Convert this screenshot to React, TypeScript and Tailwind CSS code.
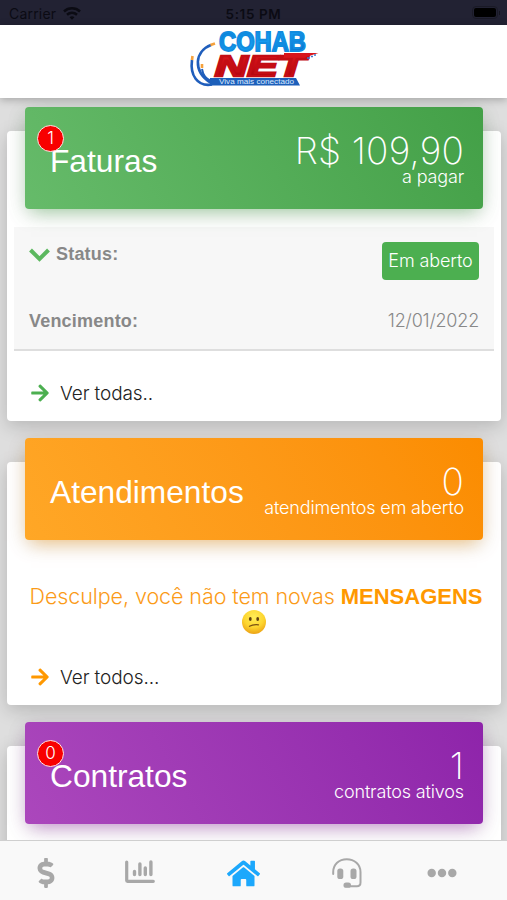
import type { ReactNode } from 'react'
import { FaArrowRight, FaDollarSign, FaEllipsisH, FaHome } from 'react-icons/fa'

const TABS = [
  { name: 'Financeiro', icon: <FaDollarSign size={30} />, active: false },
  { name: 'Consumo', icon: <ChartIcon />, active: false },
  { name: 'Início', icon: <FaHome size={33} />, active: true },
  { name: 'Suporte', icon: <HeadsetIcon />, active: false },
  { name: 'Mais', icon: <FaEllipsisH size={30} />, active: false },
]

function ChartIcon() {
  return (
    <svg width="30" height="24" viewBox="0 0 30 24" fill="none" stroke="currentColor" strokeLinecap="round" className="shrink-0 -translate-x-[5px] -translate-y-px">
      <path d="M1.700 2V20.500Q1.700 21.300 2.500 21.300H28.300" strokeWidth="3.200" />
      <path d="M9.500 11.500V14.500M14.900 4V14.500M20.300 8V14.500M25.900 2V14.500" strokeWidth="3.400" />
    </svg>
  )
}

function HeadsetIcon() {
  return (
    <svg width="30" height="30" viewBox="0 0 30 30" fill="none" stroke="currentColor" className="shrink-0 translate-x-[4px]">
      <path d="M1.200 16V14C1.200 6.500 7 1.200 14.700 1.200S28.500 6.500 28.500 14V24.500Q28.500 28.200 25 28.200H14" strokeWidth="2" strokeLinecap="round" />
      <rect x="5.300" y="10.500" width="6" height="10.500" rx="2.600" fill="currentColor" stroke="none" />
      <rect x="18.500" y="10.500" width="6" height="10.500" rx="2.600" fill="currentColor" stroke="none" />
      <rect x="11.500" y="24.500" width="7.500" height="5.300" rx="2.600" fill="currentColor" stroke="none" />
    </svg>
  )
}

function Logo() {
  return (
    <svg width="132" height="62" viewBox="0 0 132 62" aria-label="Cohab Net">
      <defs>
        <linearGradient id="cohab" x1="0" x2="1" y1="0" y2="1">
          <stop offset="0" stopColor="#0878d0" />
          <stop offset=".5" stopColor="#159cf0" />
          <stop offset="1" stopColor="#0869c2" />
        </linearGradient>
        <linearGradient id="net" x1="0" x2="0" y1="0" y2="1">
          <stop offset="0" stopColor="#e51b20" />
          <stop offset="1" stopColor="#a90009" />
        </linearGradient>
      </defs>
      <g fill="none" stroke="#1f5ebc" strokeWidth="2.600">
        <path d="M4 33C2 48 9 60 24 57.500" />
        <path d="M23 18C7 24 4 44 23 56" />
        <path d="M14 42C15 49 18 52 23 54" strokeWidth="2" />
      </g>
      <g stroke="#f5a13c" strokeWidth="2.600">
        <path d="M22.500 18L27 16.500" />
        <path d="M4 33L4.500 29" />
        <path d="M14 41L14 37" />
      </g>
      <text x="31" y="23.500" textLength="87" lengthAdjust="spacingAndGlyphs" fill="url(#cohab)" stroke="#118ce0" strokeWidth="1.800" fontFamily="Liberation Sans, sans-serif" fontWeight="700" fontSize="27.500">COHAB</text>
      <text x="27" y="48.500" textLength="90" lengthAdjust="spacingAndGlyphs" fill="url(#net)" stroke="#c40d14" strokeWidth="2.400" fontFamily="Liberation Sans, sans-serif" fontWeight="700" fontStyle="italic" fontSize="29">NET</text>
      <path d="M96 26H130.500L116 30.500H96Z" fill="#d8151b" />
      <path d="M119 31h3M123 29.500h2M126 28h2" stroke="#3d79cc" strokeWidth="1.500" />
      <path d="M22 51H108L112 58.500H22Z" fill="#1c5fba" />
      <text x="31" y="57" textLength="75" lengthAdjust="spacingAndGlyphs" fill="#dcebff" fontFamily="Liberation Sans, sans-serif" fontSize="6.500">Viva mais conectado</text>
    </svg>
  )
}

function StatusBar() {
  return (
    <div className="grid h-[25px] shrink-0 grid-cols-3 items-center bg-[#222233] px-[9px] text-[#0b0b13]">
      <div className="flex items-center gap-[7px] pt-[2px] font-['Inter',sans-serif] text-[14px] tracking-[0.2px]">
        Carrier
        <svg width="18" height="13" viewBox="0 0 18 13" fill="none" stroke="currentColor" strokeWidth="2.500">
          <path d="M1 4.500C5.500 .3 12.500 .3 17 4.500" />
          <path d="M4 7.800C7 5.200 11 5.200 14 7.800" />
          <path d="M6.500 10.200Q9 8.400 11.500 10.200L9 12.800Z" fill="currentColor" stroke="none" />
        </svg>
      </div>
      <div className="pt-[3px] text-center font-['Inter',sans-serif] text-[13.500px] font-semibold tracking-[0.6px]">5:15 PM</div>
      <div className="flex translate-x-[2px] items-center justify-end gap-px">
        <div className="h-[13px] w-[26px] rounded-[4px] border border-[#1a1a26] p-px">
          <div className="h-full rounded-[2px] bg-black" />
        </div>
        <div className="h-1 w-px bg-[#15151f]" />
      </div>
    </div>
  )
}

type CardProps = {
  title: string
  value: string
  label: string
  color: string
  badge?: string
  className: string
  children?: ReactNode
}

function Card({ title, value, label, color, badge, className, children }: CardProps) {
  return (
    <section className={`mx-[7px] mr-[6px] flex shrink-0 flex-col rounded-[4px] bg-white shadow-[0_5px_18px_rgba(0,0,0,0.18)] ${className}`}>
      <div className={`relative mx-[18px] -mt-[24px] flex h-[102px] shrink-0 items-start justify-between rounded-[4px] pr-[19px] pl-[25px] text-white ${color}`}>
        <h2 className="pt-[36px] text-[31.700px] leading-[36px]">{title}</h2>
        {badge && (
          <span className="absolute top-[18px] left-[12px] flex size-[27px] items-center justify-center rounded-full border border-[#ffe5e5] bg-[#f80000] font-['Inter',sans-serif] text-[17px] font-light">
            {badge}
          </span>
        )}
        <div className="flex flex-col items-end pt-[28px] font-['Inter',sans-serif] font-light">
          <div className="text-[37px] leading-[31px] font-extralight tracking-[0.2px]">{value}</div>
          <div className="text-[18px] leading-[22px] tracking-[-0.15px]">{label}</div>
        </div>
      </div>
      {children}
    </section>
  )
}

function MoreLink({ text, color }: { text: string; color: string }) {
  return (
    <div className="mt-auto flex h-[54px] items-start pl-[23px]">
      <FaArrowRight size={20} className={`mt-[16px] ${color}`} />
      <span className="ml-[10px] pt-[14px] font-['Inter',sans-serif] text-[19px] leading-[26px] font-light tracking-[-0.1px] text-[#222]">{text}</span>
    </div>
  )
}

export default function App() {
  return (
    <div className="flex h-[900px] w-full flex-col overflow-hidden bg-[#dedede] font-['Liberation_Sans',Arial,sans-serif]">
      <StatusBar />
      <header className="z-10 flex h-[73px] shrink-0 justify-center bg-white pt-[2px] shadow-[0_2px_8px_rgba(0,0,0,0.25)]">
        <Logo />
      </header>

      <main className="flex min-h-0 flex-1 flex-col overflow-hidden pt-[33px]">
        <Card
          title="Faturas"
          value="R$ 109,90"
          label="a pagar"
          badge="1"
          color="bg-linear-60 from-[#66bb6a] to-[#43a047] shadow-[0_7px_18px_-6px_rgba(76,175,80,0.5),0_5px_20px_rgba(0,0,0,0.12)]"
          className="h-[290px]"
        >
          <div className="mx-[7px] mt-[18px] h-[124px] border-b-2 border-[#dedede] bg-[#f7f7f7] px-[15px] text-[18px] text-[#888]">
            <div className="flex h-[70px] items-start justify-between pt-[15px]">
              <div className="flex items-center gap-[6px] leading-[24px] font-bold tracking-[0.2px]">
                <svg width="21" height="15" viewBox="0 0 21 15" fill="none" stroke="#5cb85f" strokeWidth="4" className="mt-[2px]">
                  <path d="M1.500 2L10.500 11L19.500 2" />
                </svg>
                Status:
              </div>
              <div className="flex h-[38px] w-[97px] items-center justify-center rounded-[4px] bg-[#4caf50] pb-[2px] font-['Inter',sans-serif] text-[18px] font-light tracking-[-0.1px] text-white">Em aberto</div>
            </div>
            <div className="flex items-center justify-between pt-[12px] leading-[24px]">
              <span className="font-bold tracking-[0.2px]">Vencimento:</span>
              <span className="font-['Inter',sans-serif] font-light tracking-[-0.2px]">12/01/2022</span>
            </div>
          </div>
          <MoreLink text="Ver todas.." color="text-[#4caf50]" />
        </Card>

        <Card
          title="Atendimentos"
          value="0"
          label="atendimentos em aberto"
          color="bg-linear-60 from-[#ffa726] to-[#fb8c00] shadow-[0_7px_18px_-6px_rgba(255,152,0,0.5),0_5px_20px_rgba(0,0,0,0.12)]"
          className="mt-[41px] h-[243px]"
        >
          <div className="pt-[43px] text-center font-['Inter',sans-serif] text-[21.500px] leading-[26px] font-light whitespace-nowrap text-[#fb9b18]">
            <div className="translate-x-[2px]">
              <span className="tracking-[-0.080px]">Desculpe, você não tem novas </span>
              <b className="font-['Liberation_Sans',sans-serif] text-[22px] font-bold text-[#ff9800]">MENSAGENS</b>
            </div>
            <svg width="26" height="26" viewBox="0 0 26 26" className="mx-auto -mt-px" aria-label="😕">
              <defs>
                <radialGradient id="face" cx=".5" cy=".3" r=".7">
                  <stop offset="0" stopColor="#ffed58" />
                  <stop offset=".6" stopColor="#fdd52f" />
                  <stop offset="1" stopColor="#eca316" />
                </radialGradient>
              </defs>
              <circle cx="13" cy="13" r="12" fill="url(#face)" />
              <ellipse cx="9.300" cy="10" rx="1.400" ry="2" fill="#614111" />
              <ellipse cx="16.700" cy="10" rx="1.400" ry="2" fill="#614111" />
              <path d="M8.500 17.300Q12 15.300 17.500 15.800" fill="none" stroke="#795012" strokeWidth="1.300" strokeLinecap="round" />
            </svg>
          </div>
          <MoreLink text="Ver todos..." color="text-[#ff9800]" />
        </Card>

        <Card
          title="Contratos"
          value="1"
          label="contratos ativos"
          badge="0"
          color="bg-linear-60 from-[#ab47bc] to-[#8e24aa] shadow-[0_7px_18px_-6px_rgba(156,39,176,0.5),0_5px_20px_rgba(0,0,0,0.12)]"
          className="mt-[41px] h-[243px]"
        />
      </main>

      <nav className="z-10 flex h-[60px] shrink-0 items-center justify-between border-t border-[#cfcfcf] bg-[#f9f9f9] pt-[5px] pr-[49px] pl-[29px]">
        {TABS.map(tab => (
          <button key={tab.name} aria-label={tab.name} className={`flex w-[33px] justify-center ${tab.active ? 'text-[#1da8fc]' : 'text-[#a8a8a8]'}`}>
            {tab.icon}
          </button>
        ))}
      </nav>
    </div>
  )
}
